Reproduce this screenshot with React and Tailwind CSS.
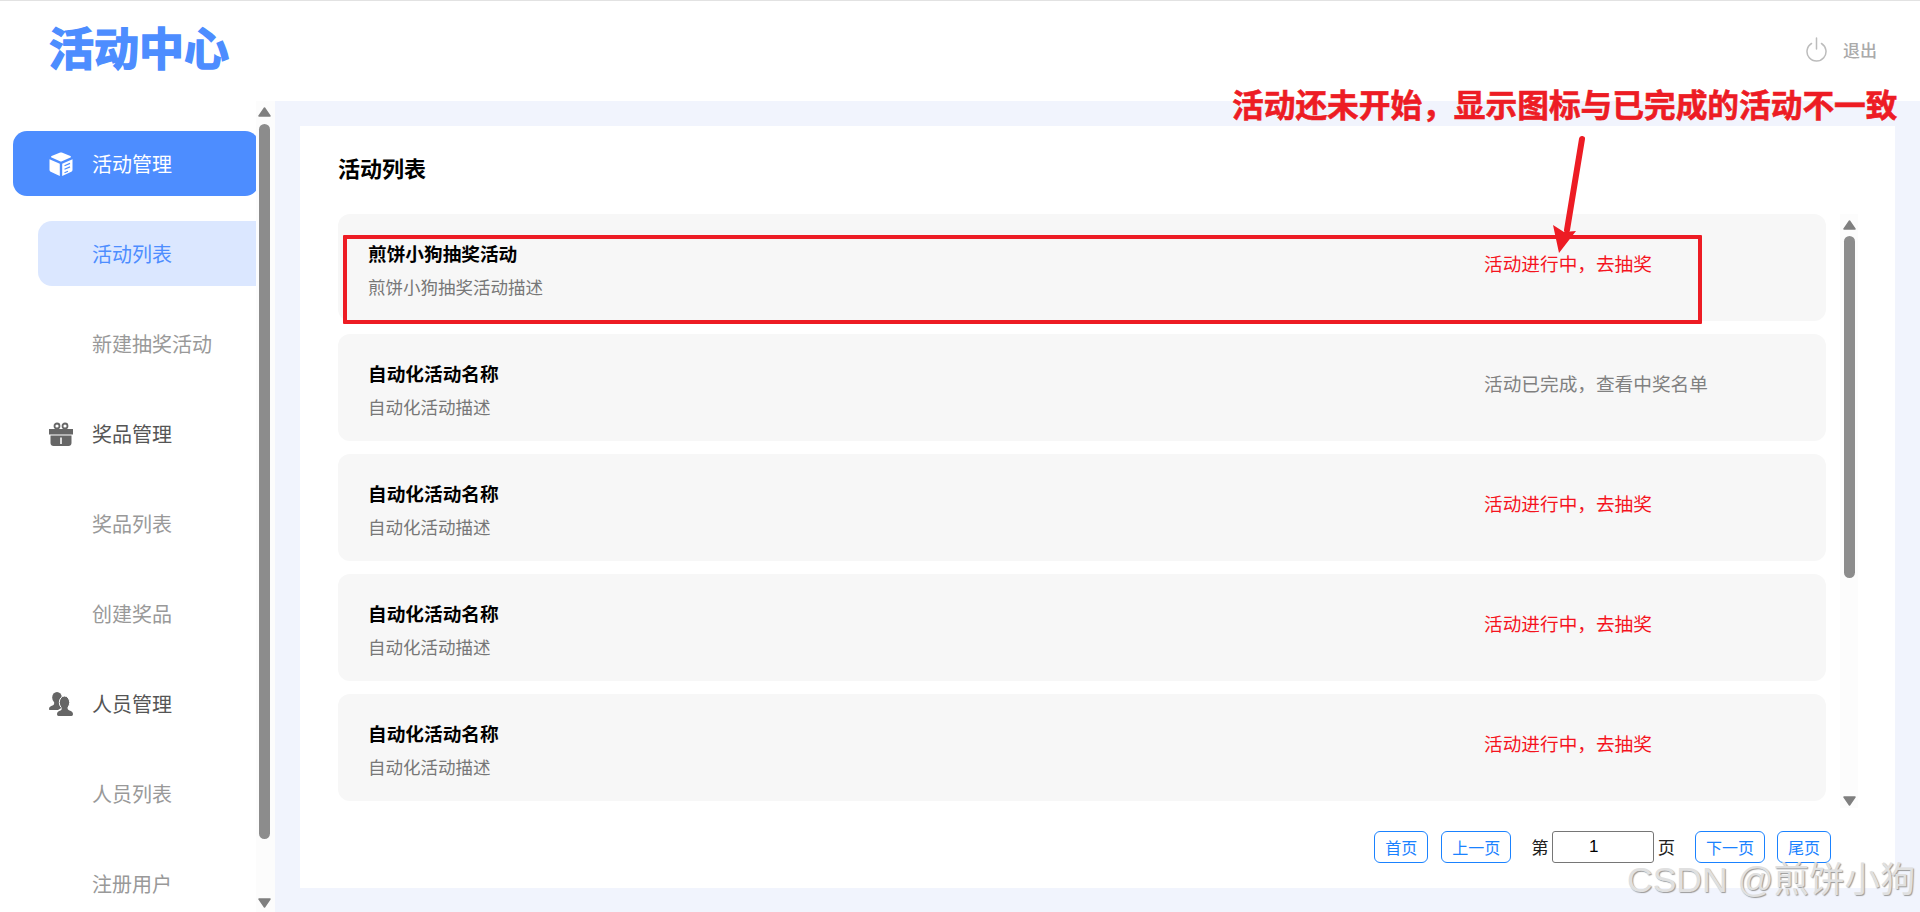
const CJK = 'font-["Noto_Sans_CJK_SC","Noto_Sans",sans-serif]';

const activities = [
  { name: '煎饼小狗抽奖活动', desc: '煎饼小狗抽奖活动描述', done: false },
  { name: '自动化活动名称', desc: '自动化活动描述', done: true },
  { name: '自动化活动名称', desc: '自动化活动描述', done: false },
  { name: '自动化活动名称', desc: '自动化活动描述', done: false },
  { name: '自动化活动名称', desc: '自动化活动描述', done: false },
];

function CubeIcon() {
  return (
    <svg width="24" height="24" viewBox="0 0 24 24" fill="#fff">
      <path d="M12 .5c.5 0 1 .1 1.400.3l8 3.200c.8.4.8 1.300 0 1.600l-8.400 3.700c-.6.3-1.400.3-2 0L2.600 5.600c-.8-.3-.8-1.200 0-1.600l8-3.200c.4-.2.9-.3 1.400-.3z" />
      <path d="M.5 7.200l10.300 4.500V24L1.700 19.800C.9 19.400.5 18.700.5 17.900z" />
      <path d="M23.500 7.200l-10.300 4.500V24l9.100-4.200c.8-.4 1.200-1.100 1.200-1.900z" />
      <path d="M15.500 13.800l5.500-2.400M15.500 17.300l5.500-2.400M15.500 20.800l3.500-1.600" stroke="#4d8dff" strokeWidth="1.200" fill="none" />
    </svg>
  );
}

function GiftIcon() {
  return (
    <svg width="24" height="24" viewBox="0 0 24 24" fill="#666">
      <path d="M0 7h24v5.500H0z" />
      <path d="M1.500 13.500h21V21c0 1.700-1.300 3-3 3h-15c-1.700 0-3-1.300-3-3z" />
      <path d="M11 15.500h2V22h-2z" fill="#ddd" />
      <circle cx="8" cy="4" r="2.500" fill="none" stroke="#666" strokeWidth="1.800" />
      <circle cx="16" cy="4" r="2.500" fill="none" stroke="#666" strokeWidth="1.800" />
    </svg>
  );
}

function UsersIcon() {
  return (
    <svg width="24" height="24" viewBox="0 0 24 24" fill="#666">
      <ellipse cx="8" cy="5.500" rx="4.800" ry="5.500" />
      <path d="M5 9h6v3l3 3-5 3H1c-.7 0-1-.5-1-1 0-2 1.800-2.800 3.500-3.400C5 13 5.500 12 5 9z" />
      <ellipse cx="15.500" cy="10.500" rx="5.200" ry="6.500" stroke="#fff" strokeWidth="1" />
      <path d="M12.500 15h6c-.2 2 .5 3 2 3.600 1.900.7 3.500 1.500 3.500 3.400 0 1-.6 2-1.500 2h-13C8.600 24 8 23 8 22c0-1.900 1.600-2.700 3.500-3.400 1.500-.6 1.200-1.600 1-3.600z" />
    </svg>
  );
}

function PowerIcon() {
  return (
    <svg width="21" height="26" viewBox="0 0 21 26" fill="none" stroke="#bcbcbc" strokeWidth="1.500" strokeLinecap="round">
      <path d="M10.500 1v11" />
      <path d="M5.500 6.500a9.500 9.500 0 1 0 10 0" />
    </svg>
  );
}

function ScrollArrow({ down }) {
  return (
    <svg width="13" height="10" viewBox="0 0 13 10" fill="#7f7f7f" stroke="#7f7f7f" strokeWidth="1.500" strokeLinejoin="round">
      <path d={down ? 'M1 1h11L6.500 9z' : 'M1 9h11L6.500 1z'} />
    </svg>
  );
}

function NavItem({ label, kind, icon }) {
  if (kind === 'active') {
    return (
      <div className="h-[65px] w-[246px] ml-[13px] shrink-0 bg-[#4d8dff] rounded-[14px] flex items-center pl-[36px] text-white text-[20px]">
        <span className="w-[43px]">{icon}</span>
        {label}
      </div>
    );
  }
  if (kind === 'current') {
    return (
      <div className="h-[65px] w-[240px] ml-[38px] shrink-0 bg-[#dbe7ff] rounded-[14px] flex items-center pl-[54px] text-[#4d8dff] text-[20px]">
        {label}
      </div>
    );
  }
  if (kind === 'group') {
    return (
      <div className="h-[65px] shrink-0 flex items-center pl-[49px] text-[#555] text-[20px]">
        <span className="w-[43px]">{icon}</span>
        {label}
      </div>
    );
  }
  return (
    <div className="h-[65px] shrink-0 flex items-center pl-[92px] text-[#999] text-[20px]">{label}</div>
  );
}

function PageButton({ children }) {
  return (
    <button className="h-[32px] px-[10px] border border-[#1a82ff] rounded-[6px] bg-white text-[#1a82ff] text-[16px] leading-none">
      {children}
    </button>
  );
}

export default function App() {
  return (
    <div className={`relative h-screen overflow-hidden flex flex-col bg-white ${CJK}`}>
      {/* header */}
      <header className="h-[101px] shrink-0 border-t border-[#e2e2e2] flex items-center justify-between pl-[49px] pr-[43px]">
        <div className="text-[45px] leading-none font-bold text-[#4d8dff] -mt-[9px] [-webkit-text-stroke:1.5px_#4d8dff]">活动中心</div>
        <div className="flex items-center gap-[16px] text-[#aaa] text-[17px] -mt-[2px]">
          <PowerIcon />
          <span className="font-medium">退出</span>
        </div>
      </header>

      <div className="flex-1 min-h-0 flex">
        {/* sidebar */}
        <aside className="w-[275px] shrink-0 flex">
          <nav className="w-[256px] overflow-hidden flex flex-col gap-[25px] pt-[30px]">
            <NavItem kind="active" label="活动管理" icon={<CubeIcon />} />
            <NavItem kind="current" label="活动列表" />
            <NavItem label="新建抽奖活动" />
            <NavItem kind="group" label="奖品管理" icon={<GiftIcon />} />
            <NavItem label="奖品列表" />
            <NavItem label="创建奖品" />
            <NavItem kind="group" label="人员管理" icon={<UsersIcon />} />
            <NavItem label="人员列表" />
            <NavItem label="注册用户" />
          </nav>
          <div className="w-[19px] bg-[#fcfcfc] flex flex-col items-center pt-[6px] pb-[4px] pr-[3px]">
            <ScrollArrow />
            <div className="w-[11px] h-[715px] mt-[7px] bg-[#8c8c8c] rounded-full"></div>
            <div className="mt-auto"><ScrollArrow down /></div>
          </div>
        </aside>

        {/* content */}
        <main className="flex-1 min-w-0 bg-[#f1f4fd] pt-[25px] pl-[25px] pr-[25px] pb-[24px]">
          <div className="h-full bg-white pl-[38px] pr-[64px] pt-[26px]">
            <h2 className="text-[22px] leading-[30px] font-bold text-black mb-[32px]">活动列表</h2>
            <div className="flex gap-[14px] -mr-[27px]">
              <div className="w-[1488px] flex flex-col gap-[13px]">
                {activities.map((item, i) => (
                  <div key={i} className="h-[107px] bg-[#f7f7f7] rounded-[12px] flex justify-between pl-[30px]">
                    <div className="pt-[26px]">
                      <div className="text-[18.67px] leading-[26px] font-bold text-black mb-[9px]">{item.name}</div>
                      <div className="text-[17.5px] leading-[24px] text-[#777]">{item.desc}</div>
                    </div>
                    <div className={item.done
                      ? 'w-[342px] pt-[36px] text-[18.67px] leading-[26px] text-[#808080]'
                      : 'w-[342px] pt-[36px] text-[18.67px] leading-[26px] text-[#f5141e]'}>
                      {item.done ? '活动已完成，查看中奖名单' : '活动进行中，去抽奖'}
                    </div>
                  </div>
                ))}
              </div>
              <div className="w-[18px] h-[594px] bg-[#fcfcfc] flex flex-col items-center pt-[6px] pb-[2px]">
                <ScrollArrow />
                <div className="w-[11px] h-[342px] mt-[6px] bg-[#8c8c8c] rounded-full"></div>
                <div className="mt-auto"><ScrollArrow down /></div>
              </div>
            </div>
            {/* pagination */}
            <div className="flex items-center justify-end mt-[23px] text-[17.33px] text-[#222]">
              <PageButton>首页</PageButton>
              <div className="w-[13px]"></div>
              <PageButton>上一页</PageButton>
              <span className="ml-[20px] mr-[3px]">第</span>
              <input
                defaultValue="1"
                className='w-[102px] h-[32px] border border-[#767676] rounded-[3px] text-center pr-[18px] text-[17px] text-black font-["Liberation_Sans",sans-serif]'
              />
              <span className="ml-[4px] mr-[20px]">页</span>
              <PageButton>下一页</PageButton>
              <div className="w-[12px]"></div>
              <PageButton>尾页</PageButton>
            </div>
          </div>
        </main>
      </div>

      {/* annotations drawn over the screenshot */}
      <div className="absolute left-[1232px] top-[83px] text-[31.7px] leading-[40px] font-bold text-[#ed1c24] whitespace-nowrap [-webkit-text-stroke:0.6px_#ed1c24]">
        活动还未开始，显示图标与已完成的活动不一致
      </div>
      <div className="absolute left-[343px] top-[235px] w-[1359px] h-[89px] border-[4px] border-[#ed1c24] rounded-[1px]"></div>
      <svg className="absolute left-[1540px] top-[130px]" width="60" height="130" viewBox="0 0 60 130" fill="#ed1c24">
        <path d="M42 9 L27 100" stroke="#ed1c24" strokeWidth="6" strokeLinecap="round" />
        <path d="M13 95 L24 102 L36 101 L19 123 Z" />
      </svg>
      <div className='absolute left-[1627px] top-[856px] text-[35.5px] leading-[48px] whitespace-nowrap text-[#e0e0e0] [text-shadow:1px_1px_1px_#999] font-["Liberation_Sans","Noto_Sans_CJK_SC",sans-serif]'>
        CSDN @煎饼小狗
      </div>
    </div>
  );
}
